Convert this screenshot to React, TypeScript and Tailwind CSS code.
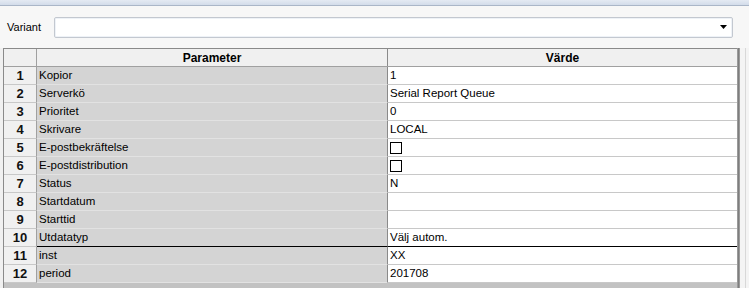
import React from "react";

const rows: { n: number; p: string; v: string; cb?: boolean }[] = [
  { n: 1, p: "Kopior", v: "1" },
  { n: 2, p: "Serverkö", v: "Serial Report Queue" },
  { n: 3, p: "Prioritet", v: "0" },
  { n: 4, p: "Skrivare", v: "LOCAL" },
  { n: 5, p: "E-postbekräftelse", v: "", cb: true },
  { n: 6, p: "E-postdistribution", v: "", cb: true },
  { n: 7, p: "Status", v: "N" },
  { n: 8, p: "Startdatum", v: "" },
  { n: 9, p: "Starttid", v: "" },
  { n: 10, p: "Utdatatyp", v: "Välj autom." },
  { n: 11, p: "inst", v: "XX" },
  { n: 12, p: "period", v: "201708" },
];

export default function App() {
  return (
    <div
      className="w-[749px] h-[288px] overflow-hidden bg-[#f0f0f0] flex flex-col text-black"
      style={{ fontFamily: '"Liberation Sans", Arial, sans-serif' }}
    >
      {/* top strip */}
      <div className="h-[6px] shrink-0 bg-gradient-to-b from-[#e4eaf3] to-[#d3dcea] border-b border-[#aab6c8]" />
      {/* variant panel */}
      <div className="h-[42px] shrink-0 flex items-center pl-[7px] pr-[16px] bg-[#f7f7f7]">
        <span className="text-[11px] w-[47px] shrink-0">Variant</span>
        <div className="flex-1 h-[21px] border border-[#c3c8d0] rounded-[2px] bg-white flex items-center justify-end pr-[5px] shadow-[inset_0_0_0_1px_#eef2f7]">
          <svg width="7" height="4" viewBox="0 0 7 4">
            <path d="M0 0H7L3.5 4Z" fill="#000" />
          </svg>
        </div>
      </div>
      {/* table */}
      <div className="flex flex-1 min-h-0">
        <div className="w-[4px] shrink-0 border-r border-[#8a8a8a] bg-[#f0f0f0]" />
        <div className="w-[733px] shrink-0 flex flex-col border-t border-[#8a8a8a]">
          <div className="flex h-[18px] border-b border-[#a0a0a0] bg-[#f0f0f0] text-[12px] font-bold">
            <div className="w-[33px] border-r border-[#a0a0a0]" />
            <div className="w-[351px] border-r border-[#8a8a8a] flex items-center justify-center">Parameter</div>
            <div className="flex-1 flex items-center justify-center">Värde</div>
          </div>
          {rows.map((r) => (
            <div key={r.n} className="flex h-[18px] text-[11.5px]">
              <div className="w-[33px] border-r border-b border-r-[#a0a0a0] border-b-[#c8c8c8] bg-[#f0f0f0] flex items-center justify-center font-bold text-[13px] text-[#111]">
                {r.n}
              </div>
              <div
                className={
                  "w-[351px] border-r border-r-[#8a8a8a] border-b bg-[#d4d4d4] flex items-center pl-[2px] " +
                  (r.n === 10 ? "border-b-black" : "border-b-[#e2e2e2]")
                }
              >
                {r.p}
              </div>
              <div
                className={
                  "flex-1 border-b bg-white flex items-center pl-[2px] " +
                  (r.n === 10 ? "border-b-black" : "border-b-[#c8c8c8]")
                }
              >
                {r.cb ? (
                  <div className="w-[12px] h-[12px] border-[1.5px] border-black bg-white" />
                ) : (
                  r.v
                )}
              </div>
            </div>
          ))}
          <div className="flex-1 bg-[#c2c2c2]" />
        </div>
        <div className="w-[3px] shrink-0 bg-[#7e7e7e] border-x border-[#9a9a9a]" />
        <div className="flex-1 flex">
          <div className="w-[5px] bg-[#f4f4f4]" />
          <div className="w-[1px] bg-[#d8d8d8]" />
          <div className="flex-1 bg-[#f4f4f4]" />
        </div>
      </div>
    </div>
  );
}
